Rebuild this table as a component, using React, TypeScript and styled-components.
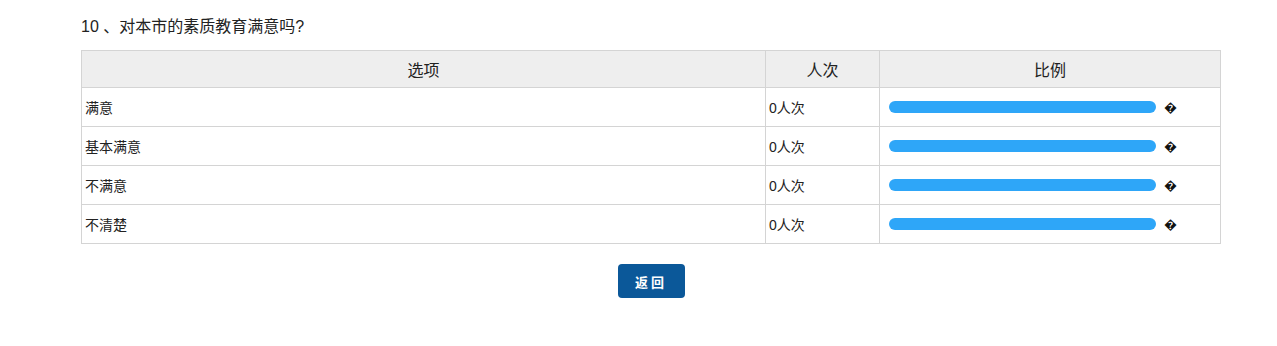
import React from 'react';
import styled, { createGlobalStyle } from 'styled-components';

const Global = createGlobalStyle`
  body {
    margin: 0;
    background: #fff;
    font-family: "Liberation Sans", "Noto Sans CJK SC", sans-serif;
    color: #222;
  }
`;

const Page = styled.div`
  padding: 16px 56px 0 81px;
  display: flex;
  flex-direction: column;
`;

const Title = styled.div`
  font-size: 16px;
  line-height: 22px;
  height: 22px;
  margin-bottom: 12px;
  color: #222;
`;

const Table = styled.table`
  width: 1140px;
  border-collapse: collapse;
  font-size: 14px;
`;

const Th = styled.th<{ w?: number }>`
  width: ${p => (p.w ? `${p.w}px` : 'auto')};
  height: 36px;
  background: #eeeeee;
  border: 1px solid #d4d4d4;
  font-weight: normal;
  font-size: 16px;
  color: #222;
  padding: 0;
`;

const Td = styled.td`
  height: 38px;
  border: 1px solid #d4d4d4;
  padding: 0 0 0 3px;
  color: #222;
`;

const RatioCell = styled.div`
  display: flex;
  align-items: center;
  padding-left: 6px;
  gap: 8px;
`;

const Bar = styled.div`
  width: 267px;
  height: 12px;
  border-radius: 6px;
  background: #2ea6f8;
`;

const Mark = styled.span`
  font-size: 13px;
  color: #111;
`;

const Footer = styled.div`
  display: flex;
  justify-content: center;
  width: 1140px;
  padding-top: 20px;
`;

const BackButton = styled.button`
  width: 67px;
  height: 34px;
  border: none;
  border-radius: 4px;
  background: #0b5899;
  color: #fff;
  font-weight: bold;
  font-size: 13px;
  letter-spacing: 3px;
  padding-left: 6px;
  font-family: "Noto Sans CJK SC", sans-serif;
  cursor: pointer;
`;

const rows = ['满意', '基本满意', '不满意', '不清楚'];

export default function App() {
  return (
    <Page>
      <Global />
      <Title>10 、对本市的素质教育满意吗?</Title>
      <Table>
        <thead>
          <tr>
            <Th w={683}>选项</Th>
            <Th w={113}>人次</Th>
            <Th>比例</Th>
          </tr>
        </thead>
        <tbody>
          {rows.map(r => (
            <tr key={r}>
              <Td>{r}</Td>
              <Td>0人次</Td>
              <Td>
                <RatioCell>
                  <Bar />
                  <Mark>{'\uFFFD'}</Mark>
                </RatioCell>
              </Td>
            </tr>
          ))}
        </tbody>
      </Table>
      <Footer>
        <BackButton>返回</BackButton>
      </Footer>
    </Page>
  );
}
